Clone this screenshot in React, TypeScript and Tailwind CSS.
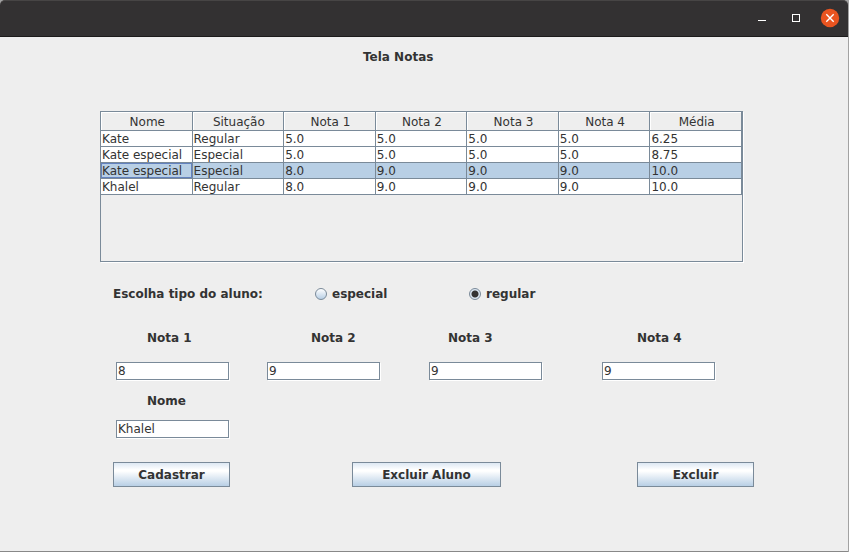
import { useState } from "react";

const columns = ["Nome", "Situação", "Nota 1", "Nota 2", "Nota 3", "Nota 4", "Média"];

const students = [
  ["Kate", "Regular", "5.0", "5.0", "5.0", "5.0", "6.25"],
  ["Kate especial", "Especial", "5.0", "5.0", "5.0", "5.0", "8.75"],
  ["Kate especial", "Especial", "8.0", "9.0", "9.0", "9.0", "10.0"],
  ["Khalel", "Regular", "8.0", "9.0", "9.0", "9.0", "10.0"],
];

const grades = [
  { id: "nota1", label: "Nota 1", value: "8", indent: "pl-[31px]" },
  { id: "nota2", label: "Nota 2", value: "9", indent: "pl-[44px]" },
  { id: "nota3", label: "Nota 3", value: "9", indent: "pl-[19px]" },
  { id: "nota4", label: "Nota 4", value: "9", indent: "pl-[35px]" },
];

function TitleBar() {
  return (
    <header className="flex h-[37px] items-center justify-end gap-2 rounded-t-[5px] border-t border-b border-t-[#474545] border-b-[#1c1b1b] bg-[#333132] pr-[5px] pb-px">
      <button type="button" aria-label="Minimizar" className="flex size-[26px] items-center justify-center">
        <svg width="10" height="10" viewBox="0 0 10 10" fill="#fff">
          <rect x="1" y="7" width="8" height="1" />
        </svg>
      </button>
      <button type="button" aria-label="Maximizar" className="flex size-[26px] items-center justify-center">
        <svg width="8" height="8" viewBox="0 0 8 8" fill="none" stroke="#fff">
          <rect x="0.5" y="0.5" width="7" height="7" />
        </svg>
      </button>
      <button type="button" aria-label="Fechar" className="flex size-[26px] items-center justify-center">
        <svg width="20" height="20" viewBox="0 0 20 20">
          <circle cx="10" cy="10" r="9.2" fill="#e95420" />
          <path d="M6.3 6.3l7.4 7.4M13.7 6.3l-7.4 7.4" stroke="#fff" strokeWidth="1.4" />
        </svg>
      </button>
    </header>
  );
}

function GradesTable() {
  const [selected, setSelected] = useState(2);
  return (
    <div className="h-[151px] overflow-hidden border border-[#7a8a99] shadow-[1px_1px_0_#fff]">
      <table className="w-full table-fixed border-separate border-spacing-0">
        <thead>
          <tr className="h-[19px]">
            {columns.map((name) => (
              <th
                key={name}
                className="h-[19px] border-r border-b border-[#7a8a99] pt-0.5 pr-0 pb-0 pl-0.5 text-center leading-4 font-normal shadow-[inset_1px_1px_0_#fff]"
              >
                {name}
              </th>
            ))}
          </tr>
        </thead>
        <tbody>
          {students.map((row, r) => (
            <tr
              key={r}
              onClick={() => setSelected(r)}
              className={r === selected ? "bg-[#b8cfe5]" : "bg-white"}
            >
              {row.map((cell, c) => (
                <td
                  key={c}
                  className={
                    r === selected && c === 0
                      ? "h-4 border-r border-b border-[#7a8a99] pt-px pr-0 pb-0 pl-px leading-[14px] whitespace-nowrap shadow-[inset_0_0_0_1px_#6382bf]"
                      : "h-4 border-r border-b border-[#7a8a99] pt-px pr-0 pb-0 pl-px leading-[14px] whitespace-nowrap"
                  }
                >
                  {cell}
                </td>
              ))}
            </tr>
          ))}
        </tbody>
      </table>
    </div>
  );
}

function TextField({ id, value }: { id: string; value: string }) {
  return (
    <input
      id={id}
      type="text"
      defaultValue={value}
      className="block h-[18px] w-[113px] border border-[#7a8a99] bg-white px-px py-0 leading-4 shadow-[1px_1px_0_#fff] outline-none"
    />
  );
}

function Radio({ id, label, checked }: { id: string; label: string; checked?: boolean }) {
  return (
    <div className="flex items-center gap-[5px]">
      <input
        id={id}
        type="radio"
        name="tipo"
        defaultChecked={checked}
        className="size-3 appearance-none rounded-full border border-[#7a8a99] bg-linear-to-b from-white to-[#b8cfe5] checked:bg-[radial-gradient(circle,#333_0_3px,#dbe7f3_4px)]"
      />
      <label htmlFor={id}>{label}</label>
    </div>
  );
}

function PushButton({ children, wide }: { children: string; wide?: boolean }) {
  return (
    <button
      type="button"
      className={`${wide ? "w-[149px]" : "w-[117px]"} h-[25px] border border-[#7a8a99] bg-[linear-gradient(#dde8f3_0%,#fff_30%,#fff_35%,#b8cfe5_100%)] font-bold`}
    >
      {children}
    </button>
  );
}

export default function App() {
  return (
    <div className="flex min-h-screen flex-col bg-[#a2a2a2] pr-px pb-0.5 font-['DejaVu_Sans',sans-serif] text-[12px] leading-4 text-[#333]">
      <TitleBar />
      <main className="flex grow flex-col bg-[#eee] pt-3 pr-[94px] pb-16 pl-[100px] shadow-[0_1px_0_#888]">
        <h1 className="pl-[263px] font-bold">Tela Notas</h1>
        <div className="mt-[46px] mr-[11px]">
          <GradesTable />
        </div>
        <form className="pl-[13px]">
          <div className="mt-6 grid grid-cols-[202fr_154fr_285fr] font-bold" role="radiogroup" aria-labelledby="tipo-aluno">
            <span id="tipo-aluno">Escolha tipo do aluno:</span>
            <Radio id="especial" label="especial" />
            <Radio id="regular" label="regular" checked />
          </div>
          <div className="mt-7 grid grid-cols-[151fr_162fr_173fr_152fr] pl-[3px]">
            {grades.map((g) => (
              <div key={g.id}>
                <label htmlFor={g.id} className={`mb-4 block font-bold ${g.indent}`}>
                  {g.label}
                </label>
                <TextField id={g.id} value={g.value} />
              </div>
            ))}
          </div>
          <div className="mt-[13px] pl-[3px]">
            <label htmlFor="nome" className="mb-[11px] block pl-[31px] font-bold">
              Nome
            </label>
            <TextField id="nome" value="Khalel" />
          </div>
          <div className="mt-6 grid grid-cols-[239fr_285fr_117fr]">
            <PushButton>Cadastrar</PushButton>
            <PushButton wide>Excluir Aluno</PushButton>
            <PushButton>Excluir</PushButton>
          </div>
        </form>
      </main>
    </div>
  );
}
